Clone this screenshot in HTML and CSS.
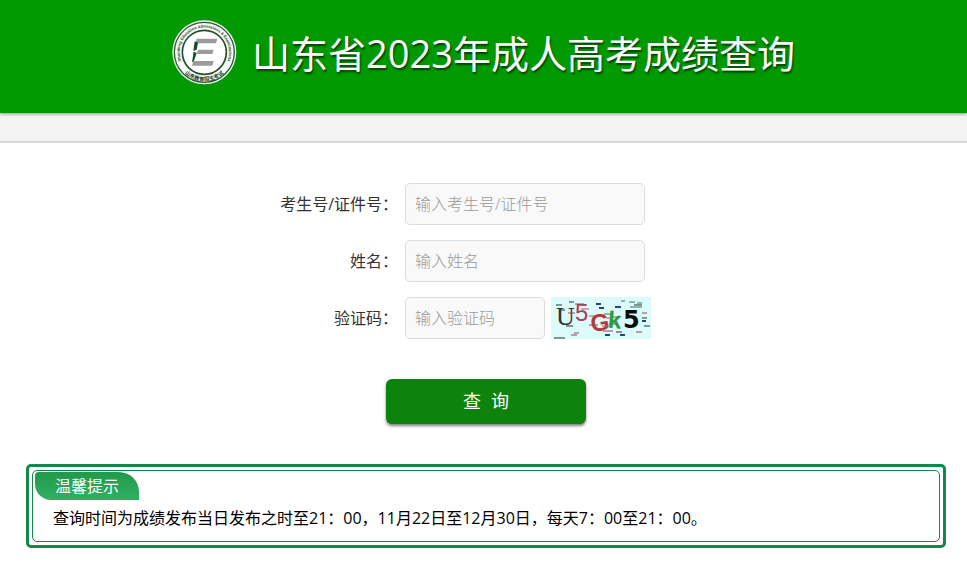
FILE: index.html
```html
<!DOCTYPE html>
<html lang="zh-CN">
<head>
  <meta charset="UTF-8">
  <meta name="viewport" content="width=device-width, initial-scale=1.0">
  <title>山东省2023年成人高考成绩查询</title>
  <link rel="stylesheet" href="styles.css">
</head>
<body>
  <header class="header">
    <svg class="logo" viewBox="0 0 195 195" aria-hidden="true">
      <defs>
        <path id="ringTop" d="M 33 134 A 74 74 0 1 1 161 134" />
        <path id="ringBottom" d="M 11 97 A 86 86 0 0 0 183 97" />
      </defs>
      <circle cx="97" cy="97" r="96" fill="#f4f8f4" />
      <circle cx="97" cy="97" r="90" fill="none" stroke="#2c5a34" stroke-width="4" />
      <circle cx="97" cy="97" r="66" fill="#fff" stroke="#24502c" stroke-width="5" />
      <text class="ring-en"><textPath href="#ringTop" startOffset="50%">Shandong Education Admissions &amp; Examinations</textPath></text>
      <text class="ring-cn"><textPath href="#ringBottom" startOffset="50%">山东教育招生考试</textPath></text>
      <path d="M74 56H136L132 70H70Z M78 89H125L121 102H74Z M64 123H125L121 137H60Z" fill="#9b9b9b" />
      <path d="M68 64L78 68L74 89L64 93Z M65 95L74 99L66 122L60 127Z" fill="#164c22" />
    </svg>
    <h1>山东省2023年成人高考成绩查询</h1>
  </header>
  <div class="strip"></div>

  <main class="wrap">
    <form class="query-form">
      <div class="row">
        <label for="ksh">考生号/证件号：</label>
        <input type="text" id="ksh" placeholder="输入考生号/证件号" autocomplete="off">
      </div>
      <div class="row">
        <label for="xm">姓名：</label>
        <input type="text" id="xm" placeholder="输入姓名" autocomplete="off">
      </div>
      <div class="row">
        <label for="yzm">验证码：</label>
        <input class="short" type="text" id="yzm" placeholder="输入验证码" autocomplete="off">
        <svg class="captcha" viewBox="0 0 100 42" role="img" aria-label="验证码">
          <rect width="100" height="42" fill="#dcfbfb" />
          <text class="c-serif" x="5" y="28" fill="#2d3433">U</text>
          <text class="c-sans" x="24" y="24" fill="#b23a5c">5</text>
          <text class="c-bold" x="40" y="34" fill="#b8383a" transform="rotate(-8 48 30)">G</text>
          <text class="c-bold" x="57" y="31" fill="#2f9a45" transform="rotate(4 62 24)">k</text>
          <text class="c-bold c-wide" x="72" y="31" fill="#0c0c0c">5</text>
          <g fill="none" stroke-width="1">
            <path d="M5 8h6M18 5h5M10 13h4M15 29h7M3 41h6M9 41h5M83 8h8M91 21h5M65 35h6M93 29h6" stroke="#25302f" />
            <path d="M24 7h9M31 8h5M17 16h7M23 36h5M20 38h6M38 28h9M52 34h10M91 16h5M85 35h6" stroke="#9d4256" />
            <path d="M45 7h5M48 11h5M54 38h5M64 10h6M91 24h4M69 38h5" stroke="#29417f" stroke-width="2" />
            <path d="M78 5h6M86 6h5M79 10h12M53 17h7M62 20h7M58 27h9M70 4h4" stroke="#397b50" />
            <path d="M38 19h5M30 12h8M55 21h6M51 29h7" stroke="#b85b62" />
          </g>
        </svg>
      </div>
      <button type="submit" class="btn">查&nbsp;&nbsp;询</button>
    </form>

    <section class="tips">
      <div class="tips-inner">
        <h2>温馨提示</h2>
        <p>查询时间为成绩发布当日发布之时至21：00，11月22日至12月30日，每天7：00至21：00。</p>
      </div>
    </section>
  </main>
</body>
</html>
```

FILE: styles.css
```css
* { box-sizing: border-box; }
body {
  margin: 0;
  background: #fff;
  color: #333;
  font: 16px/24px "Open Sans", "Noto Sans CJK SC", sans-serif;
}

.header {
  display: flex;
  justify-content: center;
  align-items: center;
  gap: 15px;
  height: 113px;
  padding-bottom: 8px;
  background: #009900;
  box-shadow: 0 1px 3px rgba(0, 0, 0, 0.4);
  position: relative;
}
.logo { width: 65px; height: 65px; }
.ring-en { font: bold 12px "Liberation Sans", sans-serif; fill: #28452d; text-anchor: middle; }
.ring-cn { font: bold 16px "Noto Sans CJK SC", sans-serif; fill: #1c3a22; text-anchor: middle; }
.header h1 {
  margin: 0;
  font-size: 38px;
  line-height: 56px;
  font-weight: 400;
  color: #fff;
  text-shadow: 1px 2px 2px rgba(0, 0, 0, 0.6);
}
.strip {
  height: 30px;
  background: #f3f3f3;
  border-bottom: 2px solid #dadada;
}

.wrap { padding: 40px 21px 19px 26px; }

.query-form {
  display: flex;
  flex-direction: column;
  gap: 15px;
  max-width: 460px;
  margin: 0 auto;
}
.row { display: flex; align-items: center; }
.row label { width: 142px; margin-right: 7px; text-align: right; white-space: nowrap; }
.row input {
  width: 240px;
  height: 42px;
  padding: 0 9px;
  border: 1px solid #ddd;
  border-radius: 5px;
  background: #f9f9f9;
  color: #333;
  font: inherit;
}
.row input.short { width: 140px; }
.row input::placeholder { color: #999; font-weight: 300; }

.captcha { width: 100px; height: 42px; margin-left: 6px; }
.c-serif { font: 26px "Liberation Serif", serif; }
.c-sans { font: 24px "Liberation Sans", sans-serif; }
.c-bold { font: bold 24px "Liberation Sans", sans-serif; }
.c-wide { font-family: "DejaVu Sans", sans-serif; }

.btn {
  align-self: center;
  width: 200px;
  height: 45px;
  margin: 25px 0 0;
  padding: 2px 0 0;
  border: 0;
  border-radius: 6px;
  background: #0d820d;
  box-shadow: 0 2px 3px rgba(0, 0, 0, 0.5);
  color: #fff;
  font: 18px/43px "Liberation Sans", "Noto Sans CJK SC", sans-serif;
  cursor: pointer;
}

.tips {
  margin-top: 40px;
  padding: 3px;
  border: 3px solid #12884a;
  border-radius: 5px;
}
.tips-inner {
  min-height: 72px;
  padding: 1px 2px 10px;
  border: 1px solid #12884a;
  border-radius: 5px;
}
.tips h2 {
  width: 104px;
  height: 28px;
  margin: 0;
  border-radius: 4px 20px 0 16px;
  background: linear-gradient(#239848, #30b064);
  color: #fff;
  font-size: 16px;
  line-height: 28px;
  font-weight: 400;
  text-align: center;
}
.tips p { margin: 6px 18px 0; color: #000; }
```
